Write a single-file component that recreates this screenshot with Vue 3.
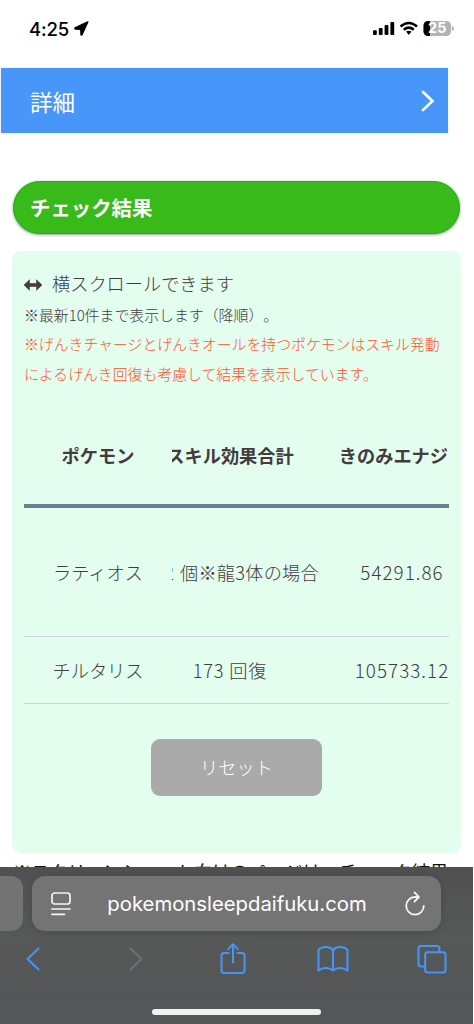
<script setup>
const rows = [
  { name: 'ラティオス', skill: '2 個※龍3体の場合', energy: '54291.86', cls: 'tall' },
  { name: 'チルタリス', skill: '173 回復', energy: '105733.12', cls: 'short' },
]
</script>

<template>
  <div class="screen">
    <header class="status">
      <span class="time">4:25</span>
      <svg class="loc" width="15" height="15" viewBox="0 0 15 15"><path d="M13.800 1 L1 7 Q.6 8 1.400 8 L6.800 8.200 L7 13.600 Q7.200 14.400 8 13.800 Z" fill="#000" stroke="#000" stroke-width="1.400" stroke-linejoin="round" /></svg>
      <span class="grow"></span>
      <svg width="82" height="18" viewBox="0 0 82 18">
        <g fill="#000">
          <rect x="1" y="10.300" width="3.800" height="4.700" rx="1" />
          <rect x="6.800" y="8" width="3.800" height="7" rx="1" />
          <rect x="12.600" y="5" width="3.800" height="10" rx="1" />
          <rect x="18.400" y="2" width="3.800" height="13" rx="1" />
          <path d="M34.100 11.600 Q36.800 9.800 39.500 11.600 L36.800 14.900 Z" />
        </g>
        <path d="M28.500 6.500 Q36.800 -0.600 45.100 6.500 M31.800 9.700 Q36.800 5.500 41.800 9.700" fill="none" stroke="#000" stroke-width="2.500" />
        <rect x="51.500" y="1" width="27.500" height="15" rx="4.500" fill="#b3b3b3" />
        <path d="M58 1 H56 A4.500 4.500 0 0 0 51.500 5.500 V11.500 A4.500 4.500 0 0 0 56 16 H58 Z" fill="#000" />
        <path d="M80 6 Q82 6.400 82 8.500 Q82 10.600 80 11 Z" fill="#b3b3b3" />
        <text x="65.300" y="13.400" text-anchor="middle" class="pct">25</text>
      </svg>
    </header>

    <div class="detail">
      <span>詳細</span>
      <svg width="14" height="22" viewBox="0 0 14 22"><path d="M2 2 L11.500 11 L2 20" fill="none" stroke="#fff" stroke-width="2.600" stroke-linecap="round" /></svg>
    </div>

    <h2 class="title">チェック結果</h2>

    <section class="panel">
      <p class="scroll">
        <svg width="18" height="12" viewBox="0 0 18 12"><path d="M0 6 L5.500 .8 V4.500 H12.500 V.8 L18 6 L12.500 11.200 V7.500 H5.500 V11.200 Z" fill="#463c40" stroke="#463c40" stroke-width=".6" stroke-linejoin="round" /></svg>
        <span>横スクロールできます</span>
      </p>
      <p class="note">※最新10件まで表示します（降順）。</p>
      <p class="warn">※げんきチャージとげんきオールを持つポケモンはスキル発動<br />によるげんき回復も考慮して結果を表示しています。</p>

      <div class="table">
        <div class="row head">
          <div class="name">ポケモン</div>
          <div class="view">
            <div class="skill">スキル効果合計</div>
            <div class="energy">きのみエナジー</div>
          </div>
        </div>
        <div v-for="r in rows" :key="r.name" class="row" :class="r.cls">
          <div class="name">{{ r.name }}</div>
          <div class="view">
            <div class="skill">{{ r.skill }}</div>
            <div class="energy num">{{ r.energy }}</div>
          </div>
        </div>
      </div>

      <button class="reset">リセット</button>
    </section>

    <p class="foot">※スクリーンショット向けのページは、チェック結果</p>

    <footer class="browser">
      <div class="tabs">
        <div class="prev"></div>
        <div class="address">
          <svg width="22" height="26" viewBox="0 0 22 26" fill="none" stroke="#f4f4f4" stroke-width="1.700" stroke-linecap="round"><rect x="2" y="2" width="18" height="11" rx="2.500" /><path d="M2 18 H20 M2 23.300 H14.500" /></svg>
          <span class="url">pokemonsleepdaifuku.com</span>
          <svg width="22" height="26" viewBox="0 0 22 26" fill="none" stroke="#f4f4f4" stroke-width="1.800" stroke-linecap="round" stroke-linejoin="round"><path d="M14 6 H11 A8.800 8.800 0 1 0 19.800 14.800 M10.500 1.300 L15 6 L10.500 10.500" /></svg>
        </div>
      </div>
      <div class="tools">
        <svg width="16" height="26" viewBox="0 0 16 26"><path d="M13.500 2.500 L2.500 13 L13.500 23.500" stroke="#4794fa" /></svg>
        <svg class="forward" width="16" height="26" viewBox="0 0 16 26"><path d="M2.500 2.500 L13.500 13 L2.500 23.500" stroke="#707070" /></svg>
        <svg width="26" height="32" viewBox="0 0 26 32"><path d="M8.500 10 H4 Q1.500 10 1.500 12.500 V27.500 Q1.500 30 4 30 H22 Q24.500 30 24.500 27.500 V12.500 Q24.500 10 22 10 H17.500 M13 19.500 V1.500 M8.200 6.100 L13 1.300 L17.800 6.100" stroke="#4794fa" /></svg>
        <svg width="32" height="28" viewBox="0 0 32 28"><path d="M16 5 Q13 2 9 2 Q4 2 1.500 5 V25.500 Q4.500 23 9 23 Q13 23 16 25.500 Q19 23 23 23 Q27.500 23 30.500 25.500 V5 Q28 2 23 2 Q19 2 16 5 V25" stroke="#4794fa" /></svg>
        <svg class="pages" width="30" height="30" viewBox="0 0 30 30"><rect x="8.200" y="8.200" width="20.300" height="20.300" rx="2.500" stroke="#4794fa" /><path d="M8 22.500 H4 Q1.500 22.500 1.500 20 V4.500 Q1.500 2 4 2 H20 Q22.500 2 22.500 4.500 V8" stroke="#4794fa" /></svg>
      </div>
      <div class="home"></div>
    </footer>
  </div>
</template>

<style>
body { margin: 0; background: #fff; overflow: hidden; }
</style>
<style scoped>
* { box-sizing: border-box; }
.screen { width: 474px; height: 1024px; overflow: hidden; display: flex; flex-direction: column; background: #fff; color: #433b3e; font-family: "Noto Sans CJK JP", sans-serif; font-weight: 300; text-spacing-trim: space-all; }
p, h2 { margin: 0; white-space: nowrap; }
.status { height: 68px; flex: none; display: flex; align-items: flex-start; padding: 20px 20px 0 29px; }
.time { font: 500 18.500px/18px Inter, sans-serif; color: #000; letter-spacing: -.1px; width: 45px; }
.loc { margin-top: 1px; }
.grow { flex: 1; }
.pct { font: 700 14.500px Inter, sans-serif; fill: #fff; }
.detail { flex: none; height: 65px; width: 447px; margin-left: 1px; background: #4896fa; box-shadow: 0 0 1px #bbb; color: #fff; display: flex; align-items: center; justify-content: space-between; padding: 1px 13px 0 29px; font-size: 22.500px; font-weight: 400; }
.title { flex: none; margin: 48px 0 0 13px; width: 447px; height: 53px; border-radius: 27px; background: #39ba1b; border: 1px solid #13b70b; box-shadow: 0 1px 3px rgba(0,0,0,.4); color: #fff; font-size: 20.400px; line-height: 50px; font-weight: 700; padding-left: 16px; }
.panel { flex: none; margin: 17px 0 0 12px; width: 449px; height: 602px; border-radius: 9px; background: #e3fdee; padding: 16px 12px 0; }
.scroll { display: flex; align-items: center; gap: 10px; height: 31px; font-size: 18.200px; }
.scroll svg { margin-top: 4px; }
.note { font-size: 14.900px; line-height: 33px; height: 31px; }
.warn { font-size: 14.870px; line-height: 30px; color: #ff5430; }
.table { margin-top: 15px; width: 425px; font-size: 18.200px; }
.row { display: flex; align-items: center; border-bottom: 1px solid #ccd3dc; white-space: nowrap; }
.head { height: 104px; border-bottom: 4px solid #6f7e8e; font-weight: 700; padding-top: 1px; }
.tall { height: 129px; }
.short { height: 67px; padding-bottom: 1px; }
.name { width: 148px; text-align: center; flex: none; }
.view { width: 277px; overflow: hidden; display: flex; align-items: center; }
.skill { width: 180px; margin-left: -32px; flex: none; display: flex; justify-content: center; }
.tall .skill { justify-content: flex-end; padding-right: 1px; letter-spacing: .25px; word-spacing: 1.500px; }
.short .skill { letter-spacing: .8px; }
.energy { width: 163px; flex: none; text-align: center; }
.head .energy { padding-left: 2px; }
.num { font-size: 18.800px; line-height: 26px; letter-spacing: 1.050px; padding-left: 1px; }
.reset { display: block; margin: 35px 0 0 127px; width: 171px; height: 57px; border: 0; border-radius: 9px; background: #aaa; color: #fff; font: 300 18.200px "Noto Sans CJK JP", sans-serif; padding: 0 0 2px; }
.foot { flex: none; height: 14px; line-height: 37px; margin-left: 13px; overflow: hidden; font-size: 18.200px; font-weight: 400; color: #111; }
.browser { flex: none; width: 473px; height: 157px; background: linear-gradient(#505050, #575858 45%, #545556 80%, #545659); display: flex; flex-direction: column; }
.tabs { display: flex; gap: 9px; padding-top: 9px; }
.prev { width: 23px; height: 55px; background: #737373; border-radius: 0 12px 12px 0; }
.address { width: 409px; height: 55px; border-radius: 13px; background: #747474; box-shadow: 0 1px 8px rgba(0,0,0,.14); display: flex; align-items: center; justify-content: space-between; padding: 0 15px 0 18px; }
.url { font: 400 20.300px/25px Inter, sans-serif; color: #fff; position: relative; left: -1px; }
.tools { display: grid; grid-template-columns: repeat(5, 100px); justify-items: center; align-items: center; height: 56px; margin-left: -17px; }
.tools svg { fill: none; stroke-width: 2; stroke-linecap: round; stroke-linejoin: round; }
.tools .forward { margin-left: 5px; }
.tools .pages { margin-right: 2px; }
.home { width: 169px; height: 6px; border-radius: 3px; background: #f1f1f1; margin: 22px 0 0 152px; }
</style>
